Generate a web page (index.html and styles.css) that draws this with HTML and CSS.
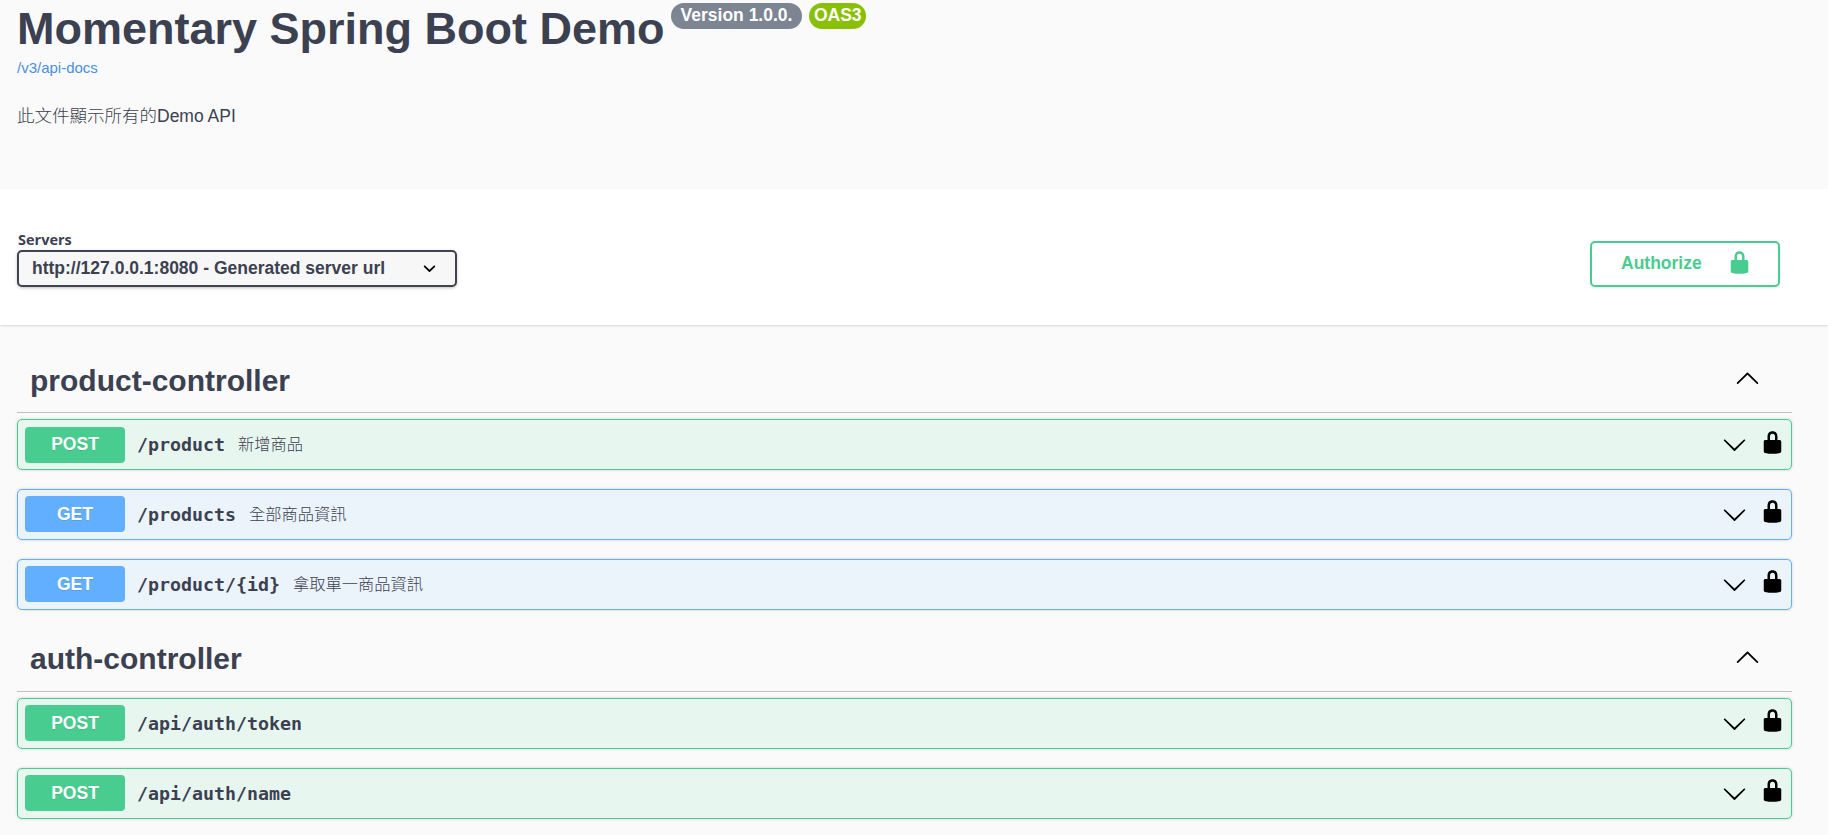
FILE: index.html
```html
<!DOCTYPE html>
<html lang="zh-Hant">
<head>
<meta charset="utf-8">
<title>Swagger UI</title>
<link rel="stylesheet" href="styles.css">
</head>
<body>
<svg class="defs" aria-hidden="true">
  <symbol id="locked" viewBox="0 0 20 20"><path d="M15.8 8H14V5.6C14 2.703 12.665 1 10 1 7.334 1 6 2.703 6 5.6V8H4c-.553 0-1 .646-1 1.199V17c0 .549.428 1.139.951 1.307l1.197.387C5.672 18.861 6.55 19 7.1 19h5.8c.549 0 1.428-.139 1.951-.307l1.196-.387c.524-.167.953-.757.953-1.306V9.199C17 8.646 16.352 8 15.8 8zM12 8H8V5.199C8 3.754 8.797 3 10 3c1.203 0 2 .754 2 2.199V8z"/></symbol>
  <symbol id="arrow-down" viewBox="0 0 20 20"><path d="M17.418 6.109c.272-.268.709-.268.979 0s.271.701 0 .969l-7.908 7.83c-.27.268-.707.268-.979 0l-7.908-7.83c-.27-.268-.27-.701 0-.969.271-.268.709-.268.979 0L10 13.25l7.418-7.141z"/></symbol>
  <symbol id="arrow-up" viewBox="0 0 20 20"><path d="M17.418 14.908c.272.268.709.268.979 0s.271-.701 0-.969l-7.908-7.83c-.27-.268-.707-.268-.979 0l-7.908 7.83c-.27.268-.27.701 0 .969.271.268.709.268.979 0L10 7.767l7.418 7.141z"/></symbol>
</svg>
<header class="info">
  <div class="title-row">
    <h1 class="title">Momentary Spring Boot Demo</h1>
    <span class="badge">Version 1.0.0.</span>
    <span class="badge badge-oas">OAS3</span>
  </div>
  <a class="docs-link">/v3/api-docs</a>
  <p class="description">此文件顯示所有的Demo API</p>
</header>
<section class="schemes">
  <div class="servers">
    <span class="servers-label">Servers</span>
    <div class="select">
      <span>http://127.0.0.1:8080 - Generated server url</span>
      <svg class="select-arrow" viewBox="0 0 20 20"><path d="M13.418 7.859c.271-.268.709-.268.978 0 .27.268.272.701 0 .969l-3.908 3.83c-.27.268-.707.268-.979 0l-3.908-3.83c-.27-.267-.27-.701 0-.969.271-.268.709-.268.978 0L10 11l3.418-3.141z"/></svg>
    </div>
  </div>
  <button class="authorize"><span>Authorize</span><svg class="icon"><use href="#locked"/></svg></button>
</section>
<main class="operations">
  <section class="tag">
    <div class="tag-head"><h2>product-controller</h2><svg class="icon"><use href="#arrow-up"/></svg></div>
    <div class="op post first"><span class="method">POST</span><span class="path">/product</span><span class="summary">新增商品</span><svg class="icon arrow"><use href="#arrow-down"/></svg><svg class="icon lock"><use href="#locked"/></svg></div>
    <div class="op get"><span class="method">GET</span><span class="path">/products</span><span class="summary">全部商品資訊</span><svg class="icon arrow"><use href="#arrow-down"/></svg><svg class="icon lock"><use href="#locked"/></svg></div>
    <div class="op get"><span class="method">GET</span><span class="path">/product/{id}</span><span class="summary">拿取單一商品資訊</span><svg class="icon arrow"><use href="#arrow-down"/></svg><svg class="icon lock"><use href="#locked"/></svg></div>
  </section>
  <section class="tag">
    <div class="tag-head tag-head-raised"><h2>auth-controller</h2><svg class="icon"><use href="#arrow-up"/></svg></div>
    <div class="op post"><span class="method">POST</span><span class="path">/api/auth/token</span><svg class="icon arrow"><use href="#arrow-down"/></svg><svg class="icon lock"><use href="#locked"/></svg></div>
    <div class="op post"><span class="method">POST</span><span class="path">/api/auth/name</span><svg class="icon arrow"><use href="#arrow-down"/></svg><svg class="icon lock"><use href="#locked"/></svg></div>
  </section>
</main>
</body>
</html>
```
FILE: styles.css
```css
* { box-sizing: border-box; }
body {
  margin: 0;
  height: 835px;
  overflow: hidden;
  background: #fafafa;
  color: #3b4151;
  font-family: "Liberation Sans", Arial, "Noto Sans CJK TC", sans-serif;
}
h1, h2, p { margin: 0; }
.defs { display: none; }
.icon { width: 25px; height: 25px; flex: none; fill: currentColor; }

/* API info */
.info { height: 189px; padding-left: 17px; }
.title-row { display: flex; align-items: flex-start; height: 59px; }
.title { font-size: 45px; line-height: 51px; padding-top: 3px; white-space: nowrap; }
.badge {
  margin: 3px 0 0 7px;
  height: 26px;
  padding: 0 10px;
  border-radius: 13px;
  background: #7d8492;
  color: #fff;
  font-size: 17.5px;
  font-weight: 700;
  line-height: 24px;
  white-space: nowrap;
}
.title + .badge { margin-left: 6px; }
.badge-oas { background: #89bf04; padding: 0 4.5px; }
.docs-link { display: block; height: 18px; line-height: 18px; font-size: 15px; color: #4990e2; }
.description { margin-top: 27px; font-size: 17.5px; line-height: 25px; font-weight: 300; }

/* Server selection */
.schemes {
  display: flex;
  justify-content: space-between;
  align-items: flex-start;
  height: 136px;
  padding: 41px 48px 0 17px;
  background: #fff;
  box-shadow: 0 1px 2px rgba(0, 0, 0, .15);
}
.servers { width: 440px; }
.servers-label { display: block; height: 20px; padding-left: 1px; font: 700 14.5px/20px "Open Sans", sans-serif; }
.select {
  display: flex;
  align-items: center;
  justify-content: space-between;
  height: 37px;
  padding: 0 15px 0 13px;
  border: 2px solid #41444e;
  border-radius: 5px;
  background: #f7f7f7;
  box-shadow: 0 1px 3px rgba(0, 0, 0, .25);
  font-size: 17.5px;
  font-weight: 700;
  white-space: nowrap;
}
.select-arrow { width: 25px; height: 25px; margin-right: -2px; fill: #000; }
.authorize {
  display: flex;
  justify-content: space-between;
  width: 190px;
  height: 46px;
  margin-top: 11px;
  padding: 7px 26px 0 29px;
  border: 2px solid #49cc90;
  border-radius: 5px;
  background: transparent;
  box-shadow: 0 1px 2px rgba(0, 0, 0, .1);
  color: #49cc90;
  font: 700 17.5px/27px "Liberation Sans", Arial, sans-serif;
}

/* Operation list */
.operations { padding: 25px 36px 0 17px; }
.tag { margin-bottom: 19px; }
.tag-head {
  display: flex;
  align-items: center;
  justify-content: space-between;
  height: 63px;
  margin-bottom: 6px;
  padding: 0 32px 7px 13px;
  border-bottom: 1px solid rgba(59, 65, 81, .3);
}
.tag-head h2 { font-size: 30px; line-height: 36px; padding-top: 7px; }
.tag-head-raised h2 { padding-top: 5px; }
.tag-head .icon { color: #000; }
.op {
  display: flex;
  align-items: flex-start;
  height: 51px;
  margin-bottom: 19px;
  padding: 6px 6px 0 7px;
  border: 1px solid;
  border-radius: 5px;
  box-shadow: 0 0 3px rgba(0, 0, 0, .19);
}
.post { border-color: #49cc90; background: #e8f6f0; }
.get { border-color: #61affe; background: #ebf3fb; }
.method {
  width: 100px;
  height: 36px;
  border-radius: 4px;
  color: #fff;
  font-size: 17.5px;
  font-weight: 700;
  line-height: 37px;
  text-align: center;
  text-shadow: 0 1px 0 rgba(0, 0, 0, .1);
}
.post .method { background: #49cc90; }
.get .method { background: #61affe; }
.first .method { margin-top: 1px; line-height: 35px; }
.path { margin-left: 12px; font: 700 18.27px/37px "DejaVu Sans Mono", monospace; }
.summary { margin-left: 13px; font-size: 16.25px; font-weight: 300; line-height: 37px; }
.arrow { margin: 6px 13px 0 auto; color: #000; }
.lock { margin-top: 3px; color: #000; }
.first .lock { margin-top: 4px; }
```
